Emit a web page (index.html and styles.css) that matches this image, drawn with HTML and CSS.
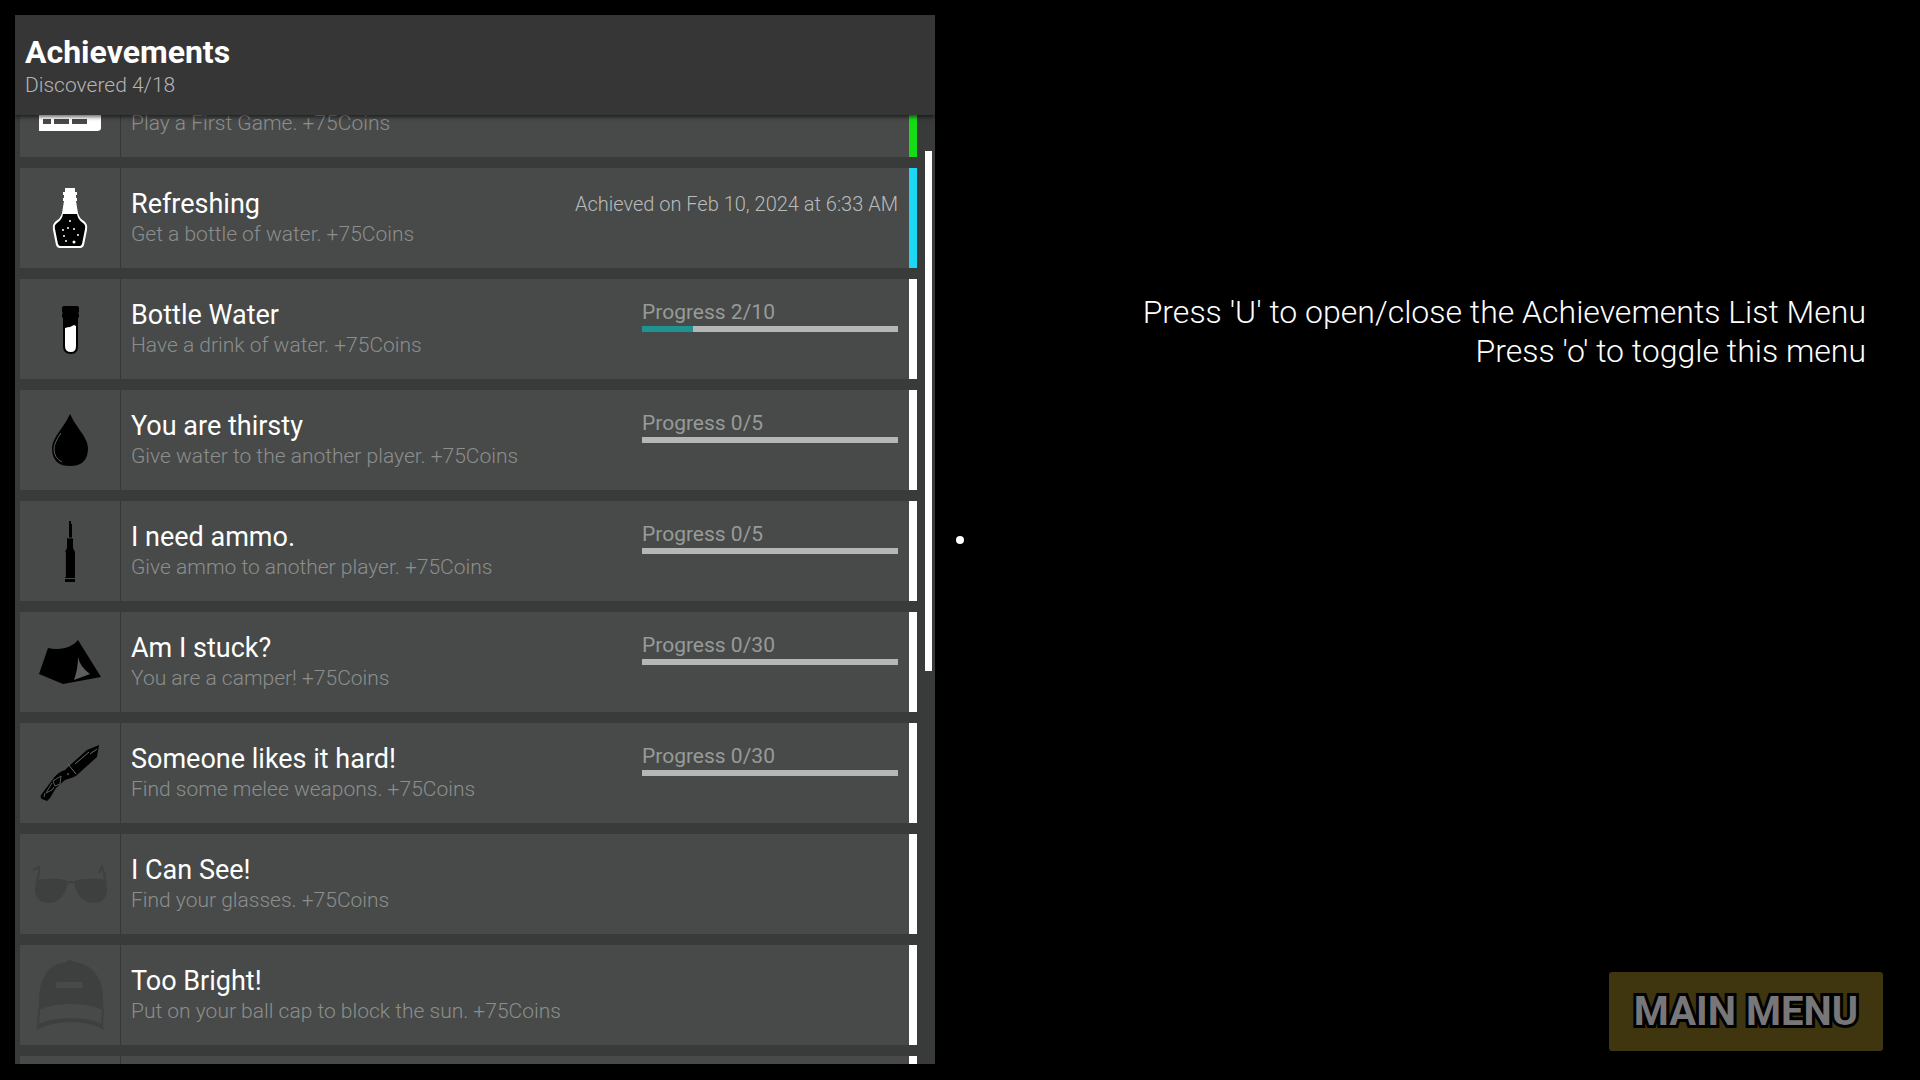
FILE: index.html
```
<!DOCTYPE html>
<html lang="en">
<head>
    <meta charset="UTF-8">
    <meta name="viewport" content="width=device-width, initial-scale=1.0">
    <title>Achievements</title>
    <link rel="stylesheet" href="styles.css">
</head>
<body>
    <section class="panel">
        <header class="panel-header">
            <h1>Achievements</h1>
            <p>Discovered 4/18</p>
        </header>

        <div class="panel-body">
            <ul class="list">
                <li class="card common">
                    <svg class="icon" viewBox="0 0 100 100">
                        <path fill="#fff" d="M19 30h62v41q0 3-4 3H19z"/>
                        <path fill="#474a49" d="M23 62h8v5h-8zM34 62h15v5H34zM52 62h15v5H52zM23 52h16v6H23zM44 52h16v6H44z"/>
                    </svg>
                    <div class="info">
                        <p>Play a First Game. +75Coins</p>
                    </div>
                </li>

                <li class="card rare">
                    <svg class="icon" viewBox="0 0 100 100">
                        <path fill="#fff" d="M45 20h10v4h2v3h-1v3h1v3h-1l2 12q1 5 6 8 4 3 3 9l-3 15q-1 3-3 3H39q-2 0-3-3l-3-15q-1-6 3-9 5-3 6-8l2-12h-1v-3h1v-3h-1v-3h2z"/>
                        <path fill="#000" d="M43 46h14q1 6 6 9 3 2 2 6l-3 15q-1 2-2 2H40q-1 0-2-2l-3-15q-1-4 2-6 5-3 6-9z"/>
                        <g fill="#fff">
                            <circle cx="50" cy="53" r="1"/>
                            <circle cx="48" cy="60" r="1"/>
                            <circle cx="54" cy="61" r="1"/>
                            <circle cx="43" cy="62" r="1"/>
                            <circle cx="44" cy="68" r="1"/>
                            <circle cx="58" cy="67" r="1"/>
                            <circle cx="46" cy="73" r="1"/>
                            <circle cx="54" cy="74" r="1.5"/>
                        </g>
                    </svg>
                    <div class="info">
                        <h2>Refreshing</h2>
                        <p>Get a bottle of water. +75Coins</p>
                    </div>
                    <time class="date" datetime="2024-02-10T06:33">Achieved on Feb 10, 2024 at 6:33 AM</time>
                </li>

                <li class="card">
                    <svg class="icon" viewBox="0 0 100 100">
                        <path fill="#000" d="M44 27h13q2 0 2 2v4l-1 1 1 1v3l-1 1v28q0 8-7 8-8 0-8-8V39l-1-1v-3l1-1-1-1v-4q0-2 2-2z"/>
                        <path fill="#fff" d="M45 49q3-1 5-1l4-2 2 1v20q0 6-5 6-6 0-6-6z"/>
                    </svg>
                    <div class="info">
                        <h2>Bottle Water</h2>
                        <p>Have a drink of water. +75Coins</p>
                    </div>
                    <div class="progress">
                        <label for="water">Progress 2/10</label>
                        <progress id="water" value="2" max="10"></progress>
                    </div>
                </li>

                <li class="card">
                    <svg class="icon" viewBox="0 0 100 100">
                        <path fill="#000" d="M50 24q3 7 9 15 9 12 9 19 0 18-18 18T32 58q0-7 9-19 6-8 9-15z"/>
                        <path fill="none" stroke="#5a5d5c" d="M41 43q-7 10-7 16 0 9 8 13"/>
                    </svg>
                    <div class="info">
                        <h2>You are thirsty</h2>
                        <p>Give water to the another player. +75Coins</p>
                    </div>
                    <div class="progress">
                        <label for="thirsty">Progress 0/5</label>
                        <progress id="thirsty" value="0" max="5"></progress>
                    </div>
                </li>

                <li class="card">
                    <svg class="icon" viewBox="0 0 100 100">
                        <path fill="#000" d="M49 20h2v3h1v14h1v10l2 4v26H45V51l2-4V37h2V23zM45 78h10v3H45z"/>
                        <path fill="none" stroke="#6a6c6b" stroke-width=".6" d="M48 37h5M45.500 51v25"/>
                    </svg>
                    <div class="info">
                        <h2>I need ammo.</h2>
                        <p>Give ammo to another player. +75Coins</p>
                    </div>
                    <div class="progress">
                        <label for="ammo">Progress 0/5</label>
                        <progress id="ammo" value="0" max="5"></progress>
                    </div>
                </li>

                <li class="card">
                    <svg class="icon" viewBox="0 0 100 100">
                        <path fill="#000" d="M28 36q8 2 17 0 8-2 13-8l23 37-38 7-24-10z"/>
                        <path fill="#5c5f5d" d="M58 45q2 10 12 17l-16 6q4-11 4-23z"/>
                    </svg>
                    <div class="info">
                        <h2>Am I stuck?</h2>
                        <p>You are a camper! +75Coins</p>
                    </div>
                    <div class="progress">
                        <label for="stuck">Progress 0/30</label>
                        <progress id="stuck" value="0" max="30"></progress>
                    </div>
                </li>

                <li class="card">
                    <svg class="icon" viewBox="0 0 100 100">
                        <path fill="#000" d="M79 22l-12 5-18 16-4 4q-7 2-12 9L21 72q-1 3 1 4l5 2 3-3 6-10 9-8 9-3 3-2 20-18z"/>
                        <path fill="none" stroke="#6a6c6b" d="M48 41l8 10M69 29L55 41M77 26l-7 5"/>
                        <path fill="none" stroke="#5a5d5c" d="M41 53l-8 5 2 5 5-2zM32 60l-6 10 6-3 2-3M25 70l-1 4"/>
                        <circle cx="48" cy="51" r="1" fill="#5a5d5c"/>
                    </svg>
                    <div class="info">
                        <h2>Someone likes it hard!</h2>
                        <p>Find some melee weapons. +75Coins</p>
                    </div>
                    <div class="progress">
                        <label for="melee">Progress 0/30</label>
                        <progress id="melee" value="0" max="30"></progress>
                    </div>
                </li>

                <li class="card locked">
                    <svg class="icon" viewBox="0 0 100 100">
                        <path d="M16 46q14-3 30 0 3 3-1 12-6 11-16 11-14 0-14-14zM86 46q-14-3-30 0-3 3 1 12 6 11 16 11 14 0 14-14z"/>
                        <path class="line" d="M45 49q6-2 12 0M17 46q3-7 2-13l-6 3M85 46q0-7-3-13l-3 6"/>
                    </svg>
                    <div class="info">
                        <h2>I Can See!</h2>
                        <p>Find your glasses. +75Coins</p>
                    </div>
                </li>

                <li class="card locked">
                    <svg class="icon" viewBox="0 0 100 100">
                        <path fill-rule="evenodd" d="M46 17q4-4 8 0 20 2 27 22 3 12 2 26-12-6-32-6t-32 6q-1-14 2-26 6-20 25-22zM37 37q-2 3 0 6h25q2-3 0-6z"/>
                        <path d="M18 79q14-6 33-6t31 6l2 6q-14-8-33-8t-35 8z"/>
                        <path class="line" d="M19 64l-1 16M83 64l-1 16"/>
                    </svg>
                    <div class="info">
                        <h2>Too Bright!</h2>
                        <p>Put on your ball cap to block the sun. +75Coins</p>
                    </div>
                </li>

                <li class="card locked">
                    <svg class="icon" viewBox="0 0 100 100"></svg>
                </li>
            </ul>

            <div class="scrollbar">
                <div class="thumb"></div>
            </div>
        </div>
    </section>

    <main class="stage">
        <p class="hint">
            Press 'U' to open/close the Achievements List Menu<br>
            Press 'o' to toggle this menu
        </p>
        <button type="button" class="main-menu">MAIN MENU</button>
    </main>

    <div class="crosshair"></div>
</body>
</html>
```
FILE: styles.css
```
* {
    box-sizing: border-box;
}

body {
    display: flex;
    height: 100vh;
    margin: 0;
    padding: 15px 0 16px 15px;
    overflow: hidden;
    background-color: #000;
    color: #fff;
    font-family: Roboto, sans-serif;
}

h1, h2, p, ul {
    margin: 0;
    padding: 0;
}

/* Left panel */
.panel {
    display: flex;
    flex-direction: column;
    width: calc(50vw - 40px);
    background-color: #393b3a;
}

.panel-header {
    position: relative;
    z-index: 1;
    padding: 18px 10px 17px;
    background-color: #363636;
    box-shadow: 0 2px 4px rgba(0, 0, 0, 0.6);
}

.panel-header h1 {
    font-size: 32px;
    line-height: 39px;
    font-weight: 700;
}

.panel-header p {
    color: #b4b4b4;
    font-size: 21px;
    line-height: 26px;
    font-weight: 300;
}

.panel-body {
    display: flex;
    flex: 1;
    gap: 8px;
    min-height: 0;
    padding: 0 3px 0 5px;
    overflow: hidden;
}

.list {
    display: flex;
    flex: 1;
    flex-direction: column;
    gap: 11px;
    /* list is scrolled down a little */
    margin-top: -58px;
    list-style: none;
}

.card {
    display: flex;
    flex: none;
    height: 100px;
    border-right: 8px solid #fff;
    background-color: #474a49;
}

.common {
    border-right-color: #16dc16;
}

.rare {
    border-right-color: #1cd8f4;
}

.icon {
    flex: none;
    width: 101px;
    height: 100px;
    border-right: 1px solid #363838;
}

.locked .icon {
    fill: #3e403f;
}

.locked .line {
    fill: none;
    stroke: #3e403f;
    stroke-width: 2;
}

.info {
    display: flex;
    flex: 1;
    flex-direction: column;
    justify-content: flex-end;
    padding: 0 0 21px 10px;
}

.info h2 {
    font-size: 27px;
    line-height: 34px;
    font-weight: 400;
}

.info p {
    color: #8c8e8d;
    font-size: 21px;
    line-height: 26px;
    font-weight: 300;
}

.date {
    padding: 24px 11px 0 0;
    color: #b9bbba;
    font-size: 20px;
    line-height: 24px;
    font-weight: 300;
}

.progress {
    display: flex;
    flex-direction: column;
    width: 256px;
    margin: 20px 11px 0 0;
}

.progress label {
    color: #989a99;
    font-size: 21px;
    line-height: 27px;
}

progress {
    display: block;
    width: 100%;
    height: 6px;
    border: none;
    background-color: #b6b6b6;
    appearance: none;
}

progress::-webkit-progress-bar {
    background-color: #b6b6b6;
}

progress::-webkit-progress-value {
    background-color: #1f9391;
}

.scrollbar {
    width: 7px;
    padding-top: 36px;
}

.thumb {
    height: 57%;
    background-color: #fff;
}

/* Right side */
.stage {
    display: flex;
    flex: 1;
    flex-direction: column;
    align-items: flex-end;
    justify-content: space-between;
    padding: 278px 37px 13px 0;
}

.hint {
    padding-right: 17px;
    font-size: 32px;
    line-height: 39px;
    font-weight: 300;
    text-align: right;
}

.main-menu {
    padding: 16px 25px;
    border: none;
    border-radius: 3px;
    background-color: #3f3610;
    color: #77777a;
    font-family: inherit;
    font-size: 40px;
    line-height: 47px;
    font-weight: 700;
    -webkit-text-stroke: 6px #000;
    paint-order: stroke fill;
    cursor: pointer;
}

.crosshair {
    position: absolute;
    top: 50%;
    left: 50%;
    width: 8px;
    height: 8px;
    border-radius: 50%;
    background-color: #fff;
    transform: translate(-50%, -50%);
}
```
